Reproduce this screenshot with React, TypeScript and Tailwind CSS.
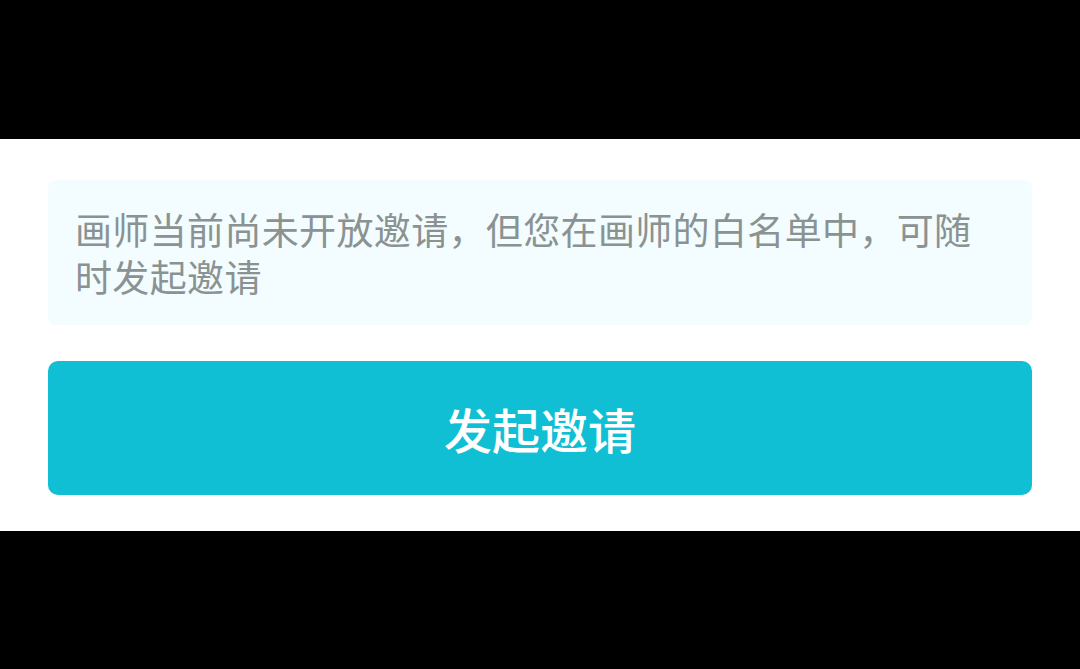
import React from 'react';

export default function App() {
  return (
    <div
      className="w-[1080px] h-[669px] bg-black flex flex-col"
      style={{ fontFamily: '"Noto Sans CJK SC", "Noto Sans", sans-serif' }}
    >
      <div className="h-[139px] shrink-0" />
      <div className="bg-white px-[48px] pt-[41px] pb-[36px] flex flex-col gap-[36px]">
        {/* Notice */}
        <div className="bg-[#f3fcfe] rounded-[8px] pl-[27px] pr-[44px] pt-[26px] pb-[25px]">
          <p className="text-[37px] leading-[47px] tracking-[0.35px] text-[#8a9292]">
            画师当前尚未开放邀请，但您在画师的白名单中，可随时发起邀请
          </p>
        </div>
        {/* Invite Button */}
        <button
          type="button"
          className="h-[134px] w-full rounded-[10px] bg-[#10bfd4] text-white text-[48px] font-medium flex items-center justify-center"
        >
          发起邀请
        </button>
      </div>
    </div>
  );
}
